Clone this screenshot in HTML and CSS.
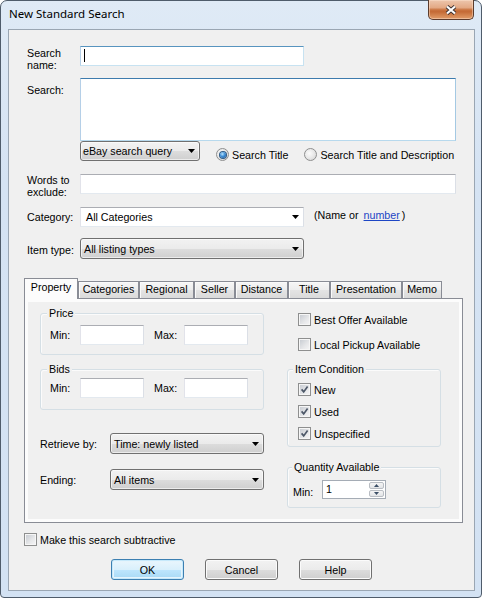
FILE: index.html
```html
<!DOCTYPE html>
<html>
<head>
<meta charset="utf-8">
<title>New Standard Search</title>
<link rel="stylesheet" href="styles.css">
</head>
<body>
<div class="window">
  <div class="titlebar">
    <span class="title">New Standard Search</span>
    <div class="close">
      <svg width="14" height="10" viewBox="0 0 14 10">
        <path d="M3 1.5 L11 8.5 M11 1.5 L3 8.5" stroke="#3a3030" stroke-width="4" fill="none"/>
        <path d="M3 1.5 L11 8.5 M11 1.5 L3 8.5" stroke="#ffffff" stroke-width="2.2" fill="none"/>
      </svg>
    </div>
  </div>
  <div class="client">
    <div class="row row-name">
      <div class="lbl lbl-name">Search<br>name:</div>
      <div class="textbox tb-hot tb-name"><span class="caret"></span></div>
    </div>
    <div class="row row-search">
      <div class="lbl lbl-search">Search:</div>
      <div class="textbox tb-focus textarea"></div>
    </div>
    <div class="row">
      <div class="lbl"></div>
      <div class="combo combo-query"><span>eBay search query</span><svg class="arrow" width="7" height="4" viewBox="0 0 7 4"><path d="M0 0H7L3.5 4Z"/></svg></div>
      <div class="radio-item ri-1"><span class="radio on"></span><span>Search Title</span></div>
      <div class="radio-item ri-2"><span class="radio"></span><span>Search Title and Description</span></div>
    </div>
    <div class="row row-words">
      <div class="lbl lbl-words">Words to<br>exclude:</div>
      <div class="textbox tb-wide"></div>
    </div>
    <div class="row row-cat">
      <div class="lbl lbl-cat">Category:</div>
      <div class="combo combo-edit"><span>All Categories</span><svg class="arrow" width="7" height="4" viewBox="0 0 7 4"><path d="M0 0H7L3.5 4Z"/></svg></div>
      <div class="hint"><span class="hint-a">(Name or</span><a class="link">number</a><span class="hint-b">)</span></div>
    </div>
    <div class="row row-type">
      <div class="lbl lbl-type">Item type:</div>
      <div class="combo combo-type"><span>All listing types</span><svg class="arrow" width="7" height="4" viewBox="0 0 7 4"><path d="M0 0H7L3.5 4Z"/></svg></div>
    </div>

    <div class="tabs">
      <div class="tab active w-prop">Property</div>
      <div class="tab w-cat">Categories</div>
      <div class="tab w-reg">Regional</div>
      <div class="tab w-sel">Seller</div>
      <div class="tab w-dist">Distance</div>
      <div class="tab w-title">Title</div>
      <div class="tab w-pres">Presentation</div>
      <div class="tab w-memo">Memo</div>
    </div>
    <div class="panel">
      <div class="col-left">
        <div class="group g-price">
          <div class="group-title">Price</div>
          <div class="g-row">
            <span class="g-lbl">Min:</span><div class="textbox small-tb"></div>
            <span class="g-lbl max-lbl">Max:</span><div class="textbox small-tb"></div>
          </div>
        </div>
        <div class="group g-bids">
          <div class="group-title">Bids</div>
          <div class="g-row">
            <span class="g-lbl">Min:</span><div class="textbox small-tb"></div>
            <span class="g-lbl max-lbl">Max:</span><div class="textbox small-tb"></div>
          </div>
        </div>
        <div class="field-row fr-retrieve">
          <span class="f-lbl">Retrieve by:</span>
          <div class="combo combo-small"><span>Time: newly listed</span><svg class="arrow" width="7" height="4" viewBox="0 0 7 4"><path d="M0 0H7L3.5 4Z"/></svg></div>
        </div>
        <div class="field-row fr-ending">
          <span class="f-lbl">Ending:</span>
          <div class="combo combo-small"><span>All items</span><svg class="arrow" width="7" height="4" viewBox="0 0 7 4"><path d="M0 0H7L3.5 4Z"/></svg></div>
        </div>
      </div>
      <div class="col-right">
        <div class="check-row cr-top"><span class="chk"></span><span>Best Offer Available</span></div>
        <div class="check-row cr-local"><span class="chk"></span><span>Local Pickup Available</span></div>
        <div class="group g-cond">
          <div class="group-title">Item Condition</div>
          <div class="check-row cr-new"><span class="chk"><svg width="9" height="9" viewBox="0 0 9 9"><path d="M1.6 4.4 L3.7 6.9 L7.6 1.6" fill="none" stroke="#4d5869" stroke-width="1.7"/></svg></span><span>New</span></div>
          <div class="check-row cr-next"><span class="chk"><svg width="9" height="9" viewBox="0 0 9 9"><path d="M1.6 4.4 L3.7 6.9 L7.6 1.6" fill="none" stroke="#4d5869" stroke-width="1.7"/></svg></span><span>Used</span></div>
          <div class="check-row cr-next"><span class="chk"><svg width="9" height="9" viewBox="0 0 9 9"><path d="M1.6 4.4 L3.7 6.9 L7.6 1.6" fill="none" stroke="#4d5869" stroke-width="1.7"/></svg></span><span>Unspecified</span></div>
        </div>
        <div class="group g-qty">
          <div class="group-title">Quantity Available</div>
          <div class="q-row">
            <span class="q-lbl">Min:</span>
            <div class="spin">
              <span class="spin-val">1</span>
              <div class="spin-btns">
                <span class="spin-btn"><svg width="5" height="3" viewBox="0 0 5 3"><path d="M0 3H5L2.5 0Z" fill="#3b4e66"/></svg></span>
                <span class="spin-btn"><svg width="5" height="3" viewBox="0 0 5 3"><path d="M0 0H5L2.5 3Z" fill="#3b4e66"/></svg></span>
              </div>
            </div>
          </div>
        </div>
      </div>
    </div>

    <div class="check-row sub-row"><span class="chk"></span><span>Make this search subtractive</span></div>

    <div class="buttons">
      <div class="btn btn-default">OK</div>
      <div class="btn">Cancel</div>
      <div class="btn">Help</div>
    </div>
  </div>
</div>
</body>
</html>
```

FILE: styles.css
```css
* { box-sizing: border-box; }
html, body { margin: 0; padding: 0; }
body {
  width: 482px;
  height: 598px;
  overflow: hidden;
  background: #ffffff;
  font-family: "Liberation Sans", Arial, sans-serif;
  font-size: 10.7px;
  line-height: 12px;
  color: #000;
}

.window {
  width: 482px;
  height: 598px;
  border: 1px solid #4f5c6b;
  border-radius: 7px 7px 4px 4px;
  background: linear-gradient(180deg, #dfeaf6 0%, #d5e3f3 30%, #d3e2f3 100%);
  padding: 0 6px 6px 7px;
  display: flex;
  flex-direction: column;
}

.titlebar {
  height: 28px;
  flex: none;
  display: flex;
  justify-content: space-between;
  align-items: flex-start;
}
.title {
  font-family: "Noto Sans", "Open Sans", sans-serif;
  font-size: 11.5px;
  line-height: 14px;
  margin: 6px 0 0 1px;
  color: #000;
}
.close {
  width: 46px;
  height: 20px;
  margin-top: -1px;
  margin-right: 1px;
  border: 1px solid #5b3b2c;
  border-top: none;
  border-radius: 0 0 5px 5px;
  background: linear-gradient(180deg, #edc6ad 0%, #e3a985 40%, #c9733f 52%, #c46a35 62%, #d78a55 85%, #e09a68 100%);
  box-shadow: inset 0 0 0 1px rgba(255, 230, 210, 0.45);
  display: flex;
  align-items: center;
  justify-content: center;
}

.client {
  flex: 1;
  border: 1px solid #9aa6b3;
  background: #f0f0f0;
  padding: 16px 15px 0 15px;
  display: flex;
  flex-direction: column;
}

.row { display: flex; align-items: flex-start; flex: none; }
.row-name { height: 20px; }
.row-search { margin-top: 12px; }
.row-words { margin-top: 13px; height: 20px; }
.row-cat { margin-top: 13px; }
.row-type { margin-top: 11px; }

.lbl { width: 56px; flex: none; padding-left: 3px; }
.lbl-name { padding-top: 1px; }
.lbl-search { padding-top: 6px; }
.lbl-words { padding-top: 0; }
.lbl-cat { padding-top: 4px; }
.lbl-type { padding-top: 6px; }

.textbox {
  height: 20px;
  background: #fff;
  border: 1px solid;
  border-color: #abadb3 #dbdfe6 #e3e9ef #e2e3ea;
  flex: none;
}
.tb-hot { border-color: #5794bf #c7e2f1 #c7e2f1 #b5cfe7; }
.tb-focus { border-color: #3d7bad #a4c9e3 #b7d9ed #b5cfe7; }
.tb-name { width: 224px; }
.textarea { width: 376px; height: 63px; }
.tb-wide { width: 376px; }
.caret {
  display: block;
  width: 1px;
  height: 13px;
  background: #000;
  margin: 2px 0 0 3px;
}

.combo {
  flex: none;
  display: flex;
  align-items: center;
  justify-content: space-between;
  height: 21px;
  border: 1px solid #707070;
  border-radius: 3px;
  background: linear-gradient(180deg, #f2f2f2 0%, #ebebeb 50%, #dddddd 51%, #cfcfcf 100%);
  box-shadow: inset 0 0 0 1px rgba(255, 255, 255, 0.6);
  padding: 0 4px 0 2px;
  white-space: nowrap;
}
.combo-query { width: 120px; height: 20px; }
.combo-type { width: 224px; padding-left: 3px; }
.combo-edit {
  width: 224px;
  height: 20px;
  border-radius: 0;
  background: #fff;
  box-shadow: none;
  border-color: #abadb3 #dbdfe6 #e3e9ef #e2e3ea;
  padding-left: 5px;
}
.combo-small { width: 154px; padding-left: 3px; }
.arrow { flex: none; fill: #000; }

.radio-item {
  display: flex;
  align-items: center;
  height: 13px;
  margin-top: 7px;
  white-space: nowrap;
}
.ri-1 { margin-left: 16px; }
.ri-2 { margin-left: 16px; }
.radio {
  width: 13px;
  height: 13px;
  flex: none;
  margin-right: 3px;
  border-radius: 50%;
  border: 1px solid #8e8f8f;
  background: radial-gradient(circle at 40% 40%, #fbfbfb 0%, #e6e6e6 55%, #cfcfcf 100%);
  display: flex;
  align-items: center;
  justify-content: center;
}
.radio.on::after {
  content: "";
  width: 6px;
  height: 6px;
  border-radius: 50%;
  background: radial-gradient(circle at 40% 35%, #b9e4fc 0%, #3d8ed6 45%, #164e91 100%);
  box-shadow: 0 0 0 1px #2d5a85;
}

.hint { margin: 2px 0 0 10px; white-space: nowrap; }
.hint-a { margin-right: 5px; }
.link { color: #1d46c5; text-decoration: underline; }
.hint-b { margin-left: 2px; }

/* Tabs */
.tabs {
  display: flex;
  align-items: flex-end;
  height: 20px;
  margin-top: 19px;
  flex: none;
}
.tab {
  flex: none;
  height: 17px;
  border: 1px solid #898c95;
  border-bottom: none;
  background: linear-gradient(180deg, #f6f6f6 0%, #ededed 50%, #e4e4e4 51%, #dadada 100%);
  box-shadow: inset 1px 1px 0 #fafafa;
  text-align: center;
  padding-top: 1px;
  white-space: nowrap;
}
.tab.active {
  height: 21px;
  margin-bottom: -1px;
  padding-top: 2px;
  background: #fcfcfc;
  box-shadow: none;
  position: relative;
  z-index: 1;
}
.w-prop { width: 54px; }
.w-cat { width: 61px; }
.w-reg { width: 55px; }
.w-sel { width: 41px; }
.w-dist { width: 53px; }
.w-title { width: 42px; }
.w-pres { width: 72px; }
.w-memo { width: 40px; }

.panel {
  flex: none;
  width: 439px;
  height: 225px;
  border: 1px solid #898c95;
  background: #f0f0f0;
  box-shadow: inset 0 0 0 3px #fcfcfc;
  display: flex;
  align-items: flex-start;
  gap: 23px;
  padding: 14px 0 0 15px;
}
.col-left { width: 224px; flex: none; display: flex; flex-direction: column; }
.col-right { width: 154px; flex: none; display: flex; flex-direction: column; }

.group {
  border: 1px solid #d5dfe5;
  border-radius: 3px;
  box-shadow: inset 1px 1px 0 #fbfbfb;
}
.group-title {
  display: block;
  width: max-content;
  background: #f0f0f0;
  padding: 0 2px;
  margin: -7px 0 0 6px;
}
.g-price { padding-bottom: 9px; }
.g-price .g-row { margin-top: 6px; }
.g-bids { margin-top: 14px; padding-bottom: 11px; }
.g-bids .g-row { margin-top: 3px; }
.g-row { display: flex; align-items: center; padding-left: 9px; }
.g-lbl { width: 30px; flex: none; }
.max-lbl { margin-left: 10px; }
.small-tb { width: 64px; }

.field-row { display: flex; align-items: center; }
.fr-retrieve { margin-top: 23px; }
.fr-ending { margin-top: 15px; }
.f-lbl { width: 70px; flex: none; }

.check-row {
  display: flex;
  align-items: center;
  height: 13px;
  white-space: nowrap;
  flex: none;
}
.col-right > .check-row { padding-left: 11px; }
.cr-local { margin-top: 12px; }
.chk {
  width: 13px;
  height: 13px;
  flex: none;
  margin-right: 3px;
  border: 1px solid #8e8f8f;
  padding: 1px;
  background: linear-gradient(135deg, #c9cdd3 0%, #e6e7e9 60%, #f3f3f4 100%) content-box, #f6f6f6;
  display: flex;
  align-items: center;
  justify-content: center;
}
.chk svg { display: block; }

.g-cond { margin-top: 18px; padding-bottom: 6px; }
.g-cond .group-title { margin-left: 5px; }
.g-cond .check-row { padding-left: 10px; }
.cr-new { margin-top: 8px; }
.cr-next { margin-top: 9px; }

.g-qty { margin-top: 20px; padding-bottom: 8px; }
.g-qty .group-title { margin-left: 4px; }
.q-row { display: flex; align-items: flex-start; margin-top: 7px; padding-left: 5px; }
.q-lbl { width: 29px; flex: none; padding-top: 6px; }
.spin {
  width: 64px;
  height: 19px;
  border: 1px solid #a5acb5;
  background: #fff;
  display: flex;
  justify-content: space-between;
  padding: 1px 1px 1px 3px;
}
.spin-val { line-height: 14px; }
.spin-btns { width: 15px; display: flex; flex-direction: column; gap: 1px; }
.spin-btn {
  flex: 1;
  border: 1px solid #b9bdc3;
  border-radius: 2px;
  background: linear-gradient(180deg, #f5f5f5, #e2e4e7);
  display: flex;
  align-items: center;
  justify-content: center;
}
.spin-btn svg { display: block; }

.sub-row { margin-top: 10px; }

.buttons {
  display: flex;
  justify-content: center;
  gap: 21px;
  margin-top: 13px;
  flex: none;
}
.btn {
  width: 73px;
  height: 21px;
  border: 1px solid #707070;
  border-radius: 3px;
  background: linear-gradient(180deg, #f2f2f2 0%, #ebebeb 50%, #dddddd 51%, #cfcfcf 100%);
  box-shadow: inset 0 0 0 1px #fbfbfb;
  display: flex;
  align-items: center;
  justify-content: center;
}
.btn-default {
  border-color: #3c7fb1;
  background: linear-gradient(180deg, #eaf6fd 0%, #d9f0fc 50%, #bee6fd 51%, #a7d9f5 100%);
  box-shadow: inset 0 0 0 1px #c6e9fb, inset 0 0 0 2px #e5f4fc;
}
```
